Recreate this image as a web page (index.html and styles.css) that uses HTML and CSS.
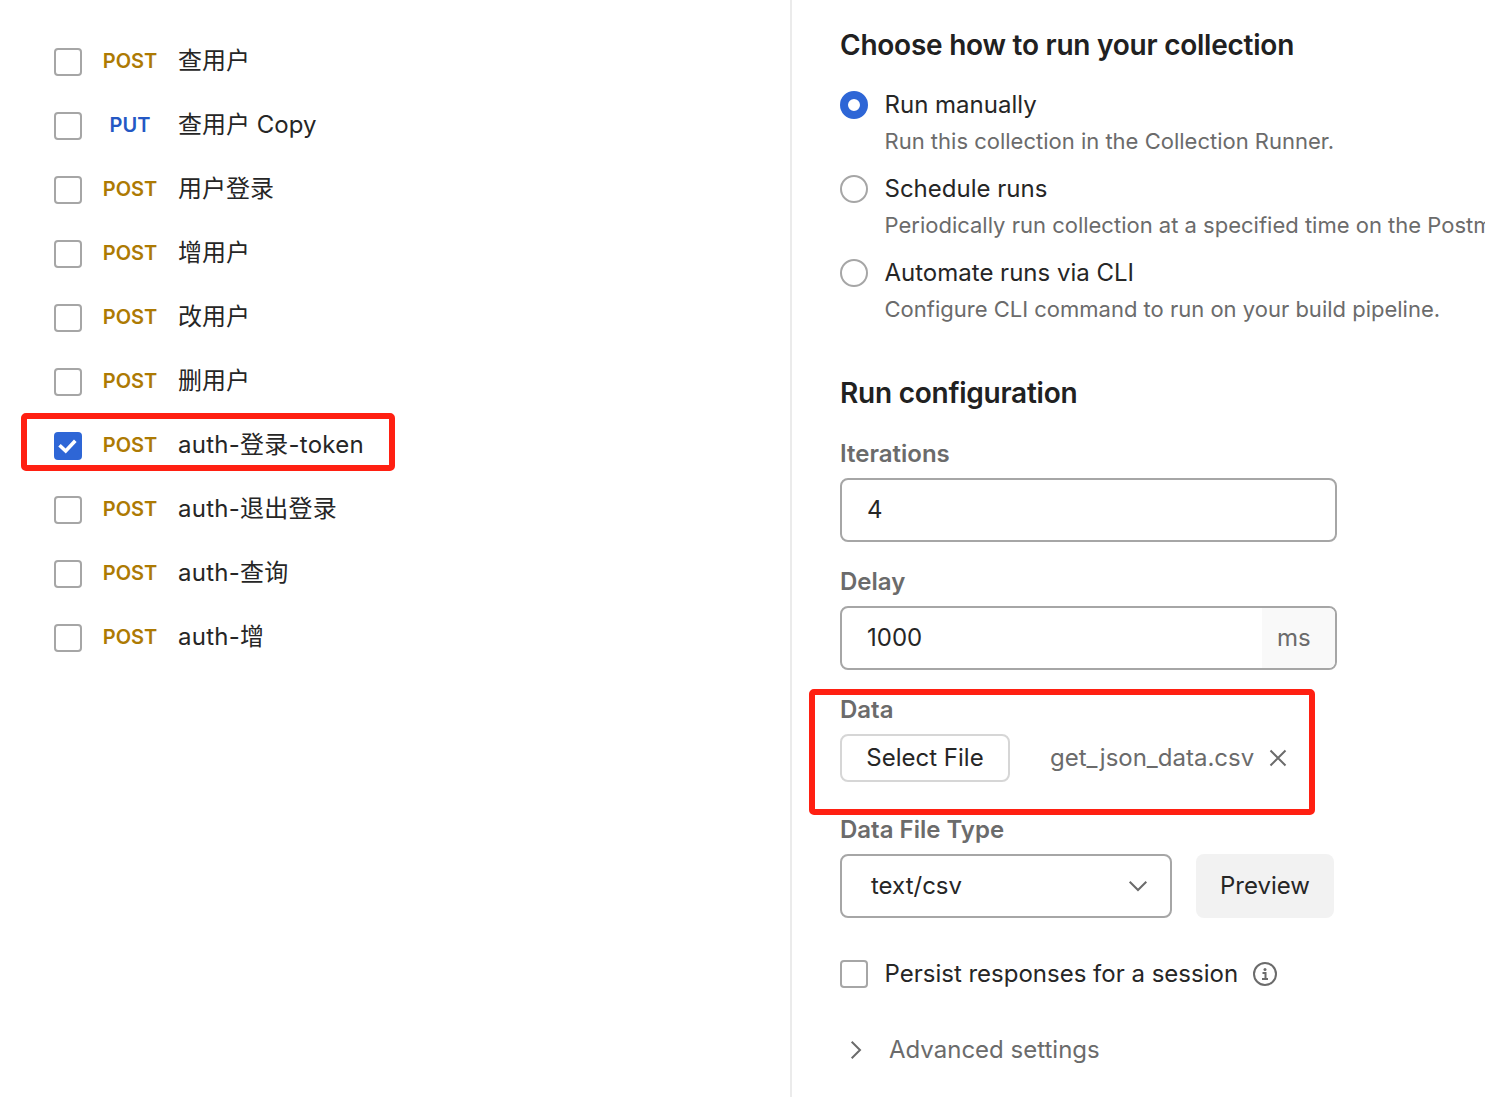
FILE: index.html
```html
<!DOCTYPE html>
<html lang="en">
<head>
<meta charset="utf-8">
<title>Collection Runner</title>
<link rel="stylesheet" href="styles.css">
</head>
<body>
<div class="runner">
  <ul class="requests">
    <li class="request"><span class="checkbox"></span><span class="method">POST</span><span class="name">查用户</span></li>
    <li class="request"><span class="checkbox"></span><span class="method put">PUT</span><span class="name">查用户 Copy</span></li>
    <li class="request"><span class="checkbox"></span><span class="method">POST</span><span class="name">用户登录</span></li>
    <li class="request"><span class="checkbox"></span><span class="method">POST</span><span class="name">增用户</span></li>
    <li class="request"><span class="checkbox"></span><span class="method">POST</span><span class="name">改用户</span></li>
    <li class="request"><span class="checkbox"></span><span class="method">POST</span><span class="name">删用户</span></li>
    <li class="request marked"><span class="checkbox checked"><svg width="28" height="28" viewBox="0 0 28 28"><path d="M5.5 13.2 L11.7 19 L21.3 8.8" fill="none" stroke="#fff" stroke-width="3.6"/></svg></span><span class="method">POST</span><span class="name auth">auth-登录-token</span></li>
    <li class="request"><span class="checkbox"></span><span class="method">POST</span><span class="name auth">auth-退出登录</span></li>
    <li class="request"><span class="checkbox"></span><span class="method">POST</span><span class="name auth">auth-查询</span></li>
    <li class="request"><span class="checkbox"></span><span class="method">POST</span><span class="name auth">auth-增</span></li>
  </ul>
  <main class="config">
    <h2 class="heading">Choose how to run your collection</h2>
    <div class="options">
      <div class="option"><span class="radio selected"></span><div><div class="title">Run manually</div><div class="desc">Run this collection in the Collection Runner.</div></div></div>
      <div class="option"><span class="radio"></span><div><div class="title">Schedule runs</div><div class="desc">Periodically run collection at a specified time on the Postman cloud.</div></div></div>
      <div class="option"><span class="radio"></span><div><div class="title">Automate runs via CLI</div><div class="desc">Configure CLI command to run on your build pipeline.</div></div></div>
    </div>
    <h2 class="heading">Run configuration</h2>
    <div class="field">
      <div class="label">Iterations</div>
      <div class="input"><span>4</span></div>
    </div>
    <div class="field">
      <div class="label">Delay</div>
      <div class="input"><span>1000</span><span class="unit">ms</span></div>
    </div>
    <div class="field data">
      <div class="label">Data</div>
      <div class="file-row">
        <div class="select-file">Select File</div>
        <span class="file-name">get_json_data.csv</span>
        <svg class="remove" width="20" height="20" viewBox="0 0 20 20"><path d="M2.5 2.5 L17.5 17.5 M17.5 2.5 L2.5 17.5" fill="none" stroke="#6b6b6b" stroke-width="2"/></svg>
      </div>
    </div>
    <div class="field type">
      <div class="label">Data File Type</div>
      <div class="type-row">
        <div class="select"><span>text/csv</span><svg width="20" height="12" viewBox="0 0 20 12"><path d="M1.7 1.7 L10 10 L18.3 1.7" fill="none" stroke="#6b6b6b" stroke-width="2"/></svg></div>
        <div class="preview">Preview</div>
      </div>
    </div>
    <div class="persist">
      <span class="checkbox"></span><span class="persist-text">Persist responses for a session</span>
      <svg class="info" width="24" height="24" viewBox="0 0 24 24"><circle cx="12" cy="12" r="11" fill="none" stroke="#6b6b6b" stroke-width="2"/><path d="M9.5 11 H12.5 V17 M9 17 H15" fill="none" stroke="#6b6b6b" stroke-width="2"/><circle cx="12" cy="7.5" r="1.5" fill="#6b6b6b"/></svg>
    </div>
    <div class="advanced"><svg width="12" height="20" viewBox="0 0 12 20"><path d="M1.7 1.7 L10 10 L1.7 18.3" fill="none" stroke="#6b6b6b" stroke-width="2"/></svg><span>Advanced settings</span></div>
  </main>
</div>
</body>
</html>
```
FILE: styles.css
```css
*, *::after { box-sizing: border-box; }
body {
  margin: 0;
  background: #fff;
  color: #262626;
  font: 370 24px/40px Inter, "Noto Sans CJK SC", sans-serif;
}
.runner {
  display: grid;
  grid-template-columns: 790px 1fr;
  height: 1097px;
  overflow: hidden;
}
.requests { margin: 0; padding: 30px 0 0 54px; list-style: none; }
.request {
  position: relative;
  display: flex;
  align-items: center;
  height: 64px;
  white-space: nowrap;
}
.checkbox {
  flex: none;
  width: 28px;
  height: 28px;
  border: 2px solid #a6a6a6;
  border-radius: 4px;
}
.checkbox.checked { border: 0; background: #2e66d6; }
.checkbox svg { display: block; }
.method {
  width: 60px;
  margin-left: 18px;
  margin-right: 18px;
  color: #ad7a03;
  font-size: 20px;
  font-weight: 600;
  text-align: center;
  transform: translateY(-1px);
}
.method.put { color: #2458c4; }
.request .name { transform: translateY(-1px); }
.request .auth { letter-spacing: 0.25px; }
/* Annotation frames drawn over the page */
.marked::after,
.data::after {
  content: "";
  position: absolute;
  border: 6px solid #ff2012;
  border-radius: 5px;
}
.marked::after { left: -33px; top: -1px; width: 374px; height: 58px; }
.data::after { left: -31px; top: -1px; width: 506px; height: 126px; }
.config {
  min-width: 0;
  padding: 25px 0 0 48px;
  border-left: 2px solid #ebebeb;
  white-space: nowrap;
}
.heading {
  margin: 0;
  color: #212121;
  font-size: 28px;
  font-weight: 600;
  line-height: 40px;
  letter-spacing: -0.24px;
}
.options { margin: 20px 0 36px; }
.option { display: flex; gap: 16.5px; height: 84px; }
.radio {
  flex: none;
  width: 28px;
  height: 28px;
  margin-top: 6px;
  border: 2px solid #a6a6a6;
  border-radius: 50%;
}
.radio.selected { border: 8px solid #2e66d6; }
.desc { color: #6b6b6b; font-size: 22px; line-height: 32px; }
.field { position: relative; margin-top: 21px; }
.field + .field { margin-top: 20px; }
.label { margin-bottom: 4px; color: #6b6b6b; font-weight: 600; }
.input {
  display: flex;
  align-items: center;
  justify-content: space-between;
  width: 497px;
  height: 64px;
  padding-left: 25px;
  border: 2px solid #a6a6a6;
  border-radius: 8px;
  overflow: hidden;
}
.unit {
  width: 73px;
  padding-left: 15px;
  background: #f9f9f9;
  color: #6b6b6b;
  line-height: 60px;
}
.file-row { display: flex; align-items: center; height: 48px; }
.select-file {
  width: 170px;
  height: 48px;
  border: 2px solid #d6d6d6;
  border-radius: 8px;
  line-height: 44px;
  text-align: center;
}
.file-name { width: 204px; margin-left: 40px; color: #6b6b6b; }
.remove { margin-left: 14px; }
.field.type { margin-top: 28px; }
.type-row { display: flex; gap: 24px; }
.select {
  display: flex;
  align-items: center;
  justify-content: space-between;
  width: 332px;
  height: 64px;
  padding: 0 22px 0 29px;
  border: 2px solid #a6a6a6;
  border-radius: 8px;
}
.preview {
  width: 138px;
  height: 64px;
  border-radius: 8px;
  background: #f2f2f2;
  line-height: 64px;
  text-align: center;
}
.persist { display: flex; align-items: center; margin-top: 36px; }
.persist-text { width: 352px; margin-left: 16.5px; }
.info { margin-left: 16.5px; }
.advanced { display: flex; align-items: center; margin-top: 36px; padding-left: 10px; color: #6b6b6b; }
.advanced span { margin-left: 27px; }
```
